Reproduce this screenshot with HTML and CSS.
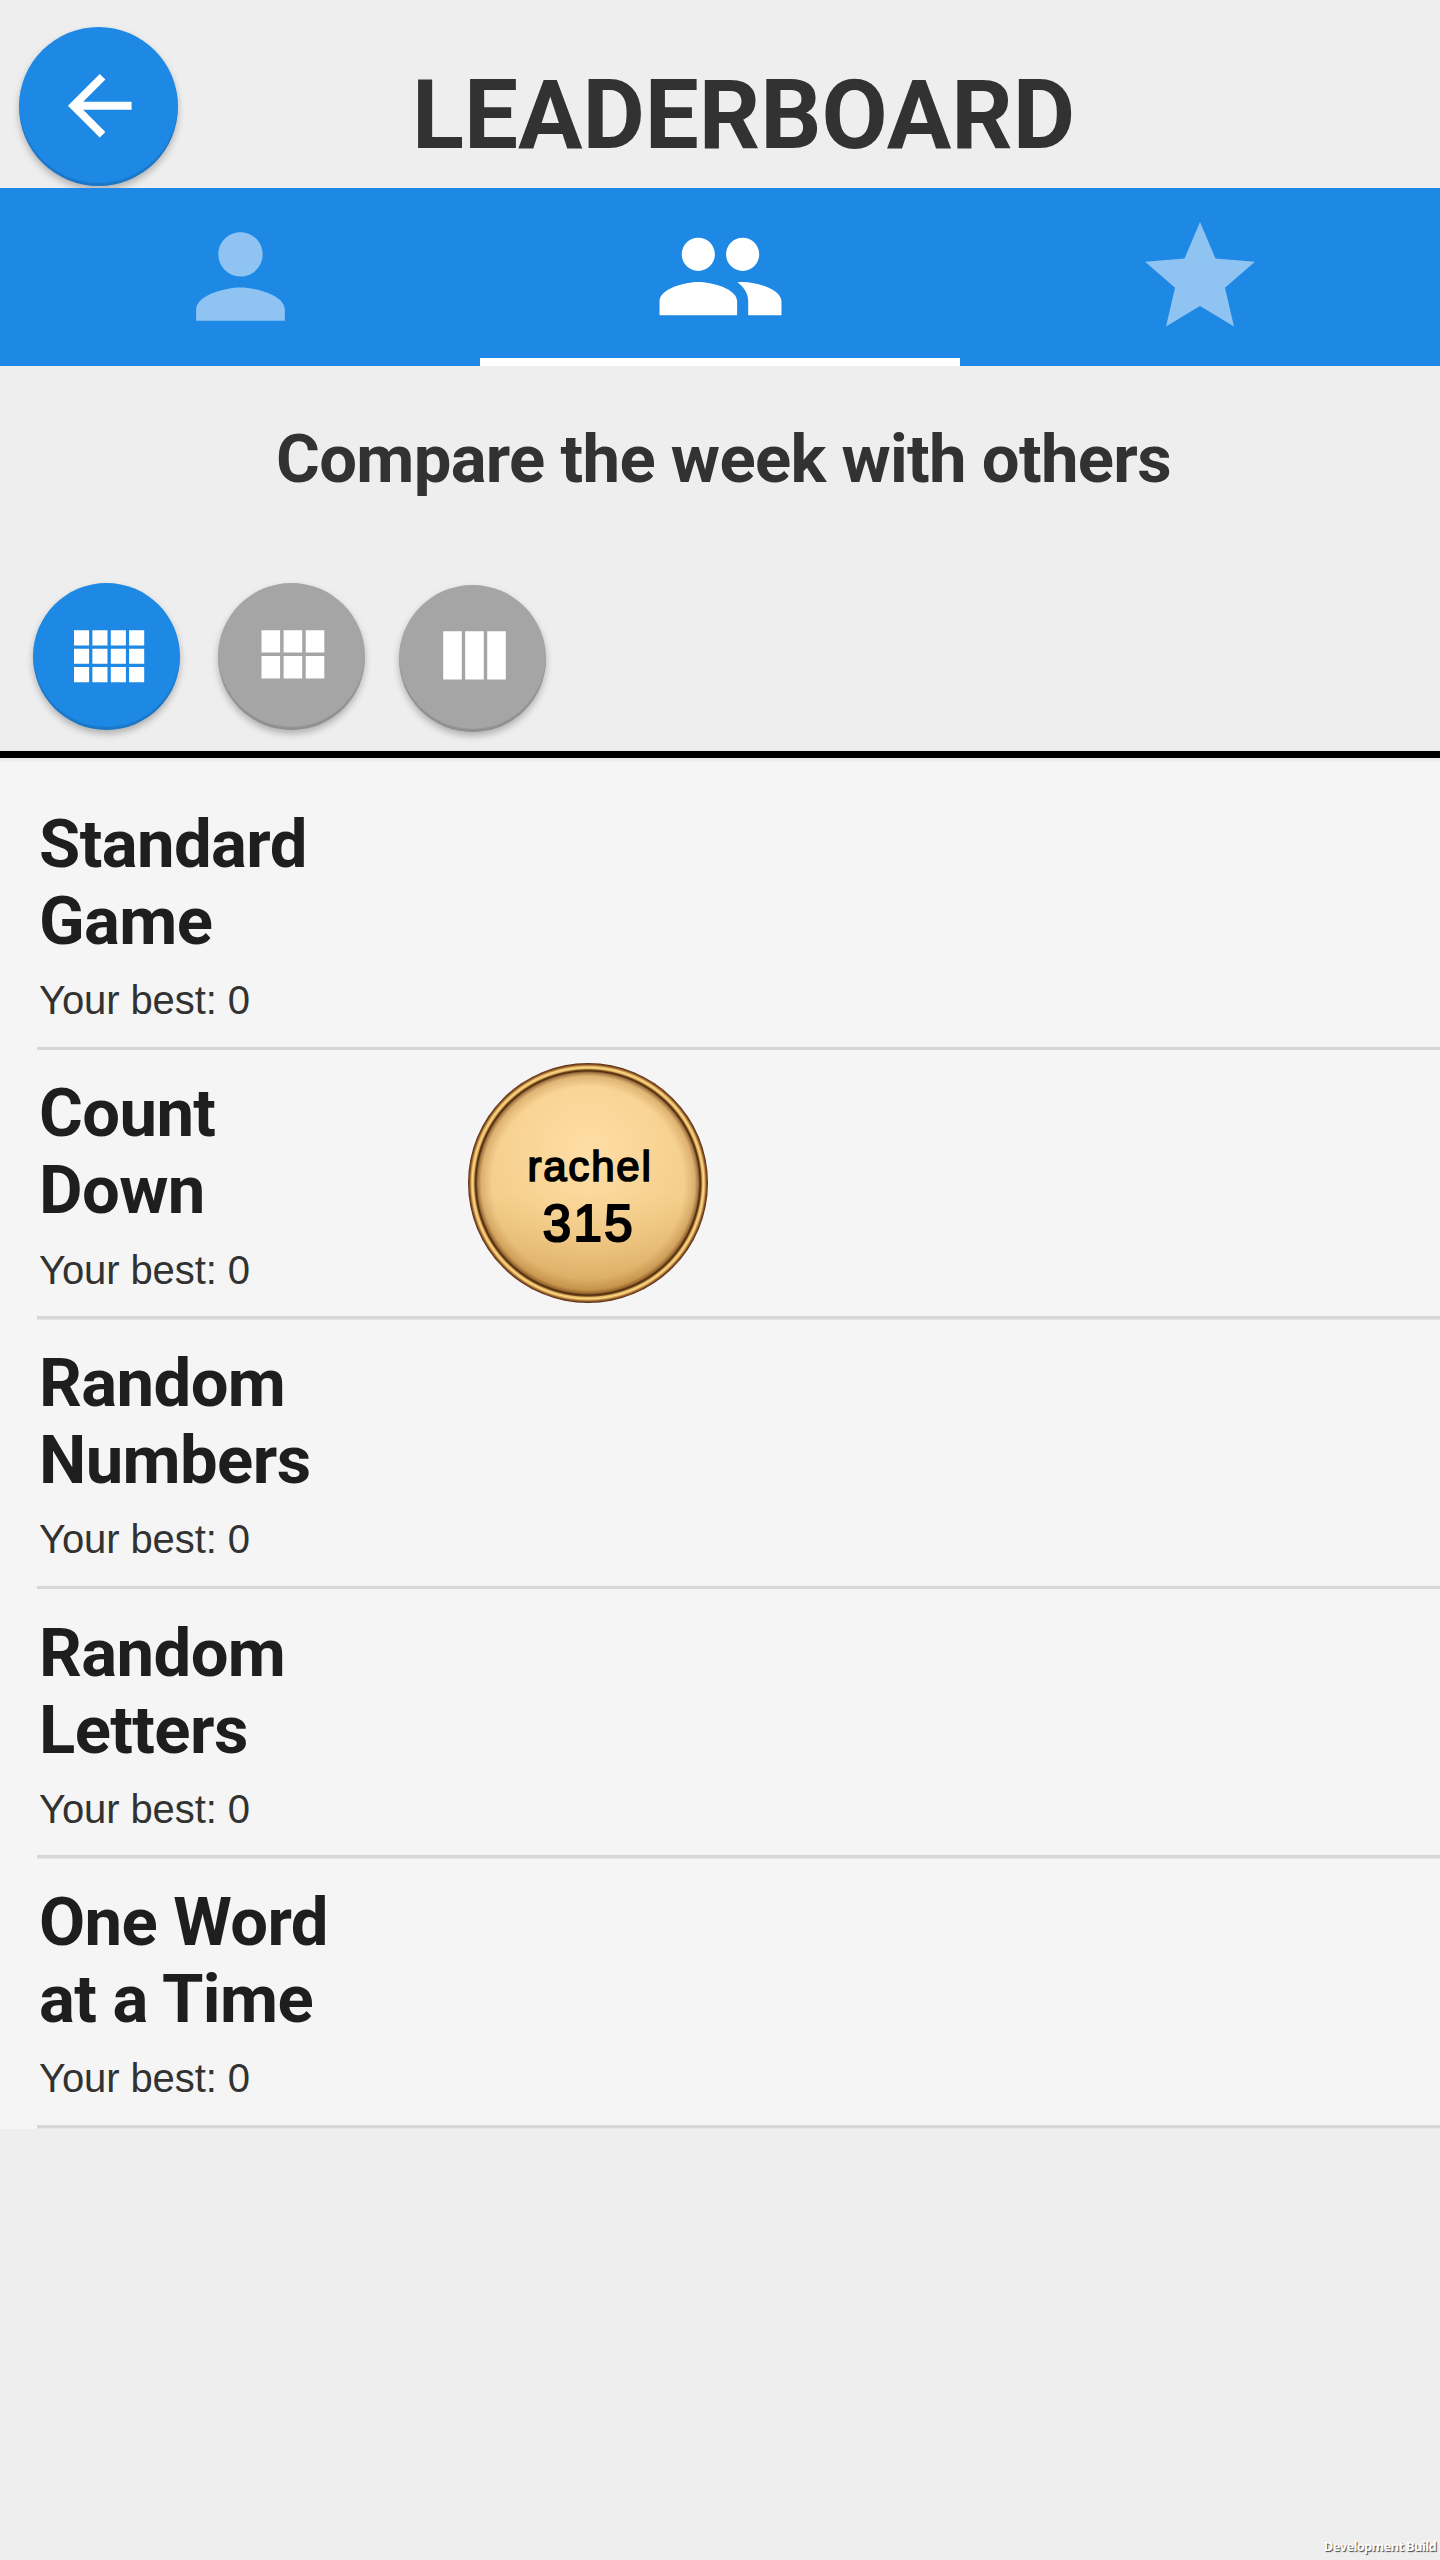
FILE: index.html
```html
<!DOCTYPE html>
<html lang="en">
<head>
<meta charset="utf-8">
<title>Leaderboard</title>
<link rel="stylesheet" href="styles.css">
</head>
<body>
<div class="app">
  <header class="header">
    <button class="round back" aria-label="Back">
      <svg class="back-icon" viewBox="0 0 24 24"><path d="M20 11H7.83l5.59-5.59L12 4l-8 8 8 8 1.41-1.41L7.83 13H20v-2z"/></svg>
    </button>
    <h1 class="title">LEADERBOARD</h1>
  </header>
  <nav class="tabs">
    <a class="tab">
      <svg class="tab-icon" viewBox="0 0 24 24"><path d="M12 12c2.21 0 4-1.79 4-4s-1.79-4-4-4-4 1.79-4 4 1.79 4 4 4zm0 2c-2.67 0-8 1.34-8 4v2h16v-2c0-2.66-5.33-4-8-4z"/></svg>
    </a>
    <a class="tab tab-active">
      <svg class="tab-icon" viewBox="0 0 24 24"><path d="M16 11c1.66 0 2.99-1.34 2.99-3S17.66 5 16 5c-1.66 0-3 1.34-3 3s1.34 3 3 3zm-8 0c1.66 0 2.99-1.34 2.99-3S9.66 5 8 5C6.34 5 5 6.34 5 8s1.34 3 3 3zm0 2c-2.33 0-7 1.17-7 3.5V19h14v-2.5c0-2.33-4.67-3.5-7-3.5zm8 0c-.29 0-.62.02-.97.05 1.16.84 1.97 1.97 1.97 3.45V19h6v-2.5c0-2.33-4.67-3.5-7-3.5z"/></svg>
    </a>
    <a class="tab">
      <svg class="tab-icon tab-star" viewBox="0 0 24 24"><path d="M12 17.27L18.18 21l-1.64-7.03L22 9.24l-7.19-.61L12 2 9.19 8.63 2 9.24l5.46 4.73L5.82 21z"/></svg>
    </a>
  </nav>
  <section class="filters">
    <h2 class="subtitle">Compare the week with others</h2>
    <div class="modes">
      <button class="round mode mode-on" aria-label="Four columns">
        <svg class="grid" width="71" height="53" viewBox="0 0 71 53"><path d="M0 .3h15.1v15.1H0zM18.4.3h15.1v15.1H18.4zM36.8.3h15.1v15.1H36.8zM55.1.3h15.1v15.1H55.1zM0 18.7h15.1v15.1H0zM18.4 18.7h15.1v15.1H18.4zM36.8 18.7h15.1v15.1H36.8zM55.1 18.7h15.1v15.1H55.1zM0 37.1h15.1v15.1H0zM18.4 37.1h15.1v15.1H18.4zM36.8 37.1h15.1v15.1H36.8zM55.1 37.1h15.1v15.1H55.1z"/></svg>
      </button>
      <button class="round mode mode-mid" aria-label="Three columns">
        <svg class="grid" width="64" height="50" viewBox="0 0 64 50"><path d="M.5.3h18.6v22.3H.5zM22.6.3h18.6v22.3H22.6zM44.7.3h18.6v22.3H44.7zM.5 26.1h18.6v22.3H.5zM22.6 26.1h18.6v22.3H22.6zM44.7 26.1h18.6v22.3H44.7z"/></svg>
      </button>
      <button class="round mode mode-last" aria-label="Single row">
        <svg class="grid" width="64" height="50" viewBox="0 0 64 50"><path d="M.2.3h18.6v48.3H.2zM22.2.3h18.6v48.3H22.2zM44.2.3h18.6v48.3H44.2z"/></svg>
      </button>
    </div>
  </section>
  <main class="list">
    <article class="row">
      <div class="info"><h3 class="name">Standard<br>Game</h3><p class="best">Your best: 0</p></div>
    </article>
    <article class="row">
      <div class="info"><h3 class="name">Count<br>Down</h3><p class="best">Your best: 0</p></div>
      <div class="medal"><span class="player">rachel</span><span class="score">315</span></div>
    </article>
    <article class="row">
      <div class="info"><h3 class="name">Random<br>Numbers</h3><p class="best">Your best: 0</p></div>
    </article>
    <article class="row">
      <div class="info"><h3 class="name">Random<br>Letters</h3><p class="best">Your best: 0</p></div>
    </article>
    <article class="row">
      <div class="info"><h3 class="name">One Word<br>at a Time</h3><p class="best">Your best: 0</p></div>
    </article>
  </main>
  <footer class="build">Development Build</footer>
</div>
</body>
</html>
```
FILE: styles.css
```css
* { box-sizing: border-box; }
body { margin: 0; background: #eeeeee; }
h1, h2, h3, p { margin: 0; }
.app {
  width: 1440px;
  height: 2560px;
  display: flex;
  flex-direction: column;
  overflow: hidden;
  background: #eeeeee;
  font-family: Roboto, "Liberation Sans", sans-serif;
}

/* Header */
.header {
  height: 188px;
  flex: none;
  display: flex;
  align-items: flex-start;
  padding: 27px 0 0 19px;
  overflow: hidden;
}
.round {
  display: flex;
  flex: none;
  border: 0;
  padding: 0;
  border-radius: 50%;
  background: #a5a5a5;
  box-shadow: 0 4px 7px rgba(0, 0, 0, .26), inset 0 -3px 1px rgba(0, 0, 0, .13);
}
.back {
  width: 159px;
  height: 159px;
  background: #1e88e5;
  padding: 31px 0 0 32.5px;
}
.back-icon { width: 95.5px; height: 95.5px; fill: #fff; }
.title {
  margin: 32px 0 0 234px;
  font-size: 96px;
  line-height: 112px;
  font-weight: 700;
  color: #323232;
  white-space: nowrap;
}

/* Tabs */
.tabs {
  height: 178px;
  flex: none;
  display: grid;
  grid-template-columns: repeat(3, 1fr);
  background: #1e88e5;
}
.tab {
  display: flex;
  align-items: center;
  justify-content: center;
  padding-bottom: 1px;
}
.tab-icon { width: 133px; height: 133px; fill: #8fc3f2; }
.tab-star { width: 132px; height: 132px; }
.tab-active { box-shadow: inset 0 -8px #fff; }
.tab-active .tab-icon { fill: #fff; }

/* Filters */
.filters {
  height: 392px;
  flex: none;
  padding: 53px 0 0 33px;
  border-bottom: 7px solid #000;
}
.subtitle {
  margin-left: 243px;
  font-size: 67px;
  line-height: 80px;
  font-weight: 700;
  letter-spacing: -.68px;
  color: #323232;
  white-space: nowrap;
}
.modes { display: flex; align-items: flex-start; margin-top: 84px; }
.mode { width: 147px; height: 147px; }
.mode-on { background: #1e88e5; padding: 47px 0 0 41px; }
.mode-mid { margin-left: 38px; padding: 47px 0 0 43px; }
.mode-last { margin: 2px 0 0 34px; padding: 46px 0 0 44px; }
.grid { fill: #fff; }

/* Score list */
.list {
  margin-top: 4px;
  flex: none;
  padding-top: 18.6px;
  background: #f5f5f5;
}
.row {
  height: 269.6px;
  margin-left: 37px;
  display: flex;
  align-items: flex-start;
  background: linear-gradient(#d6d8d7, #d6d8d7) 0 100% / 100% 3.55px no-repeat;
}
.info { width: 431px; padding: 25.2px 0 0 2px; }
.name {
  font-size: 67px;
  line-height: 77px;
  font-weight: 700;
  letter-spacing: -.6px;
  color: #1e1e1e;
}
.best {
  margin-top: 17.3px;
  font: 40px/46px "Liberation Sans", Arial, sans-serif;
  letter-spacing: -.1px;
  color: #323232;
}
.medal {
  width: 240px;
  height: 240px;
  margin-top: 13px;
  display: flex;
  flex-direction: column;
  align-items: center;
  padding-top: 79.5px;
  border-radius: 50%;
  color: #000;
  font-family: "Liberation Sans", Arial, sans-serif;
  -webkit-text-stroke: 1.7px #000;
  background:
    radial-gradient(circle closest-side, transparent 80%, rgba(150, 90, 25, .25) 89%, rgba(110, 60, 15, .6) 92%, #4a2a12 93.4%, #7a4a1c 94.3%, #e3b45f 95.2%, #f8dc8c 96.5%, #d39a4c 97.6%, #8a5528 98.6%, #5d3219 99.6%),
    radial-gradient(circle at 50% 38%, #ffdea6 0, rgba(252, 216, 150, .5) 45%, transparent 80%),
    linear-gradient(#f3cd90, #efc886 55%, #cc9a4c);
}
.player { font-size: 42px; line-height: 48px; letter-spacing: 1.8px; padding-left: 4px; }
.score { font-size: 51px; line-height: 58px; letter-spacing: 2.4px; margin-top: 4px; padding-left: 2px; -webkit-text-stroke-width: 2.2px; }

.build {
  margin: auto 4px 6px auto;
  font: 700 13px/16px "Open Sans", sans-serif;
  letter-spacing: -.7px;
  color: #fff;
  text-shadow: 1px 1px 1px #444;
}
```
